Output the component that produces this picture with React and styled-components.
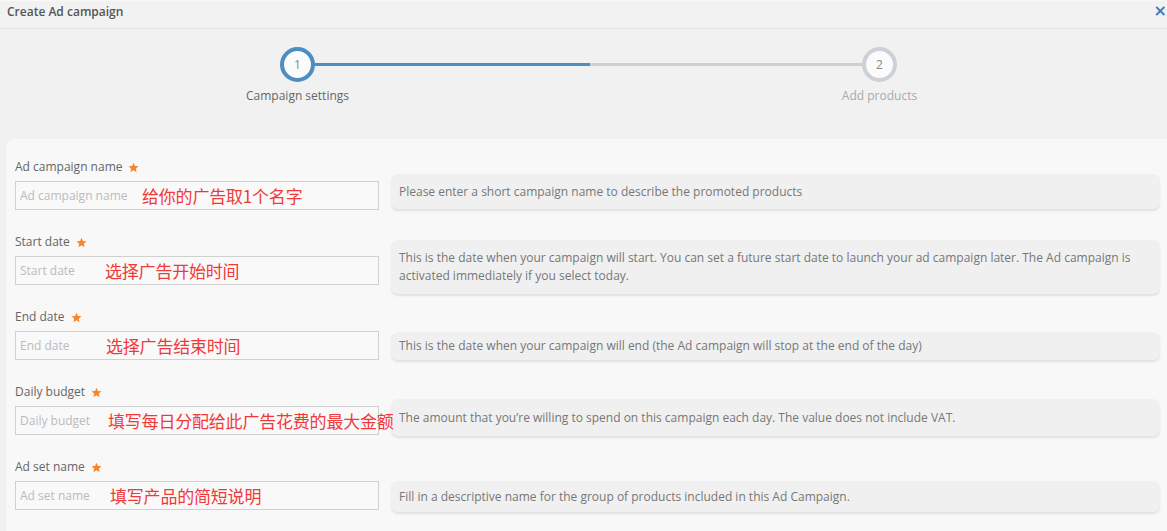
import React from 'react'
import styled, {createGlobalStyle} from 'styled-components'

const Global = createGlobalStyle`
  html, body {
    margin: 0;
    padding: 0;
    background: #f1f1f1;
    overflow: hidden;
    font-family: "Open Sans", "Noto Sans", sans-serif;
  }
`

const Page = styled.div`
  width: 1167px;
  height: 531px;
  overflow: hidden;
  background: #f1f1f1;
`

const Header = styled.div`
  height: 29px;
  box-sizing: border-box;
  display: flex;
  justify-content: space-between;
  align-items: flex-start;
  padding: 3px 0 0 7px;
  border-top: 1px solid #f8f8f8;
  border-bottom: 1px solid #e3e3e3;
  background: #f2f2f2;
`

const Title = styled.div`
  font-size: 12px;
  line-height: 16px;
  font-weight: 600;
  color: #555555;
`

const Close = styled.div`
  font-size: 16px;
  line-height: 14px;
  font-weight: bold;
  color: #3b7cc4;
  margin-right: 0;
  font-family: "DejaVu Sans", sans-serif;
`

const Stepper = styled.div`
  height: 110px;
  box-sizing: border-box;
  display: flex;
  align-items: flex-start;
  padding: 18px 0 0 280px;
`

const Step = styled.div`
  width: 35px;
  display: flex;
  flex-direction: column;
  align-items: center;
  gap: 6px;
  position: relative;
  z-index: 1;
`

const Circle = styled.div`
  width: 35px;
  height: 35px;
  box-sizing: border-box;
  border-radius: 50%;
  border: 4px solid ${p => (p.$active ? '#4c8dc2' : '#cdd0d4')};
  background: #fbfbfb;
  display: flex;
  align-items: center;
  justify-content: center;
  font-size: 12px;
  color: #888888;
`

const StepLabel = styled.div`
  font-size: 12px;
  line-height: 16px;
  white-space: nowrap;
  color: ${p => (p.$active ? '#666666' : '#aaaaaa')};
`

const Connector = styled.div`
  width: 547px;
  height: 3px;
  margin-top: 16px;
  background: linear-gradient(to right, #4c8dc2 50.3%, #cdd0d4 50.3%);
`

const Card = styled.div`
  margin-left: 6px;
  width: 1200px;
  background: #f8f8f8;
  border-radius: 8px 8px 0 0;
  padding: 20px 0 40px 9px;
  box-sizing: border-box;
  display: flex;
  flex-direction: column;
  gap: 24px;
`

const Row = styled.div`
  display: flex;
  align-items: flex-start;
  gap: 12px;
  height: 51px;
`

const Field = styled.div`
  width: 364px;
  display: flex;
  flex-direction: column;
  gap: 6px;
`

const Label = styled.div`
  display: flex;
  align-items: center;
  gap: 6px;
  font-size: 12px;
  line-height: 16px;
  color: #666666;
`

const InputBox = styled.div`
  position: relative;
  height: 29px;
  box-sizing: border-box;
  border: 1px solid #d0d0d0;
  background: #f9f9f9;
  display: flex;
  align-items: center;
  padding-left: 4px;
  font-size: 12px;
  color: #bbbbbb;
`

const Note = styled.span`
  position: absolute;
  top: 0;
  bottom: 0;
  left: ${p => p.$left}px;
  display: flex;
  align-items: center;
  z-index: 2;
  white-space: nowrap;
  font-family: "Noto Sans CJK SC", sans-serif;
  font-size: 17px;
  letter-spacing: -0.2px;
  color: #f03a3a;
`

const Help = styled.div`
  width: 769px;
  box-sizing: border-box;
  margin-top: ${p => p.$top}px;
  min-height: ${p => p.$h}px;
  display: flex;
  align-items: center;
  padding: 0 8px;
  background: #f0f0f0;
  border-radius: 7px;
  box-shadow: 0 2px 2px rgba(0, 0, 0, 0.09);
  font-size: 12px;
  line-height: 18px;
  color: #777777;
`

const Star = () => (
  <svg width="11" height="11" viewBox="0 0 24 24">
    <path
      fill="#f7862a"
      d="M12 1.5l3.1 7.2 7.8.7-5.9 5.2 1.8 7.7L12 18.2l-6.8 4.1 1.8-7.7-5.9-5.2 7.8-.7z"
    />
  </svg>
)

const fields = [
  {
    label: 'Ad campaign name',
    note: '给你的广告取1个名字',
    noteLeft: 126,
    help: 'Please enter a short campaign name to describe the promoted products',
    top: 15,
    h: 35,
  },
  {
    label: 'Start date',
    note: '选择广告开始时间',
    noteLeft: 89,
    help: 'This is the date when your campaign will start. You can set a future start date to launch your ad campaign later. The Ad campaign is activated immediately if you select today.',
    top: 6,
    h: 54,
  },
  {
    label: 'End date',
    note: '选择广告结束时间',
    noteLeft: 90,
    help: 'This is the date when your campaign will end (the Ad campaign will stop at the end of the day)',
    top: 23,
    h: 28,
  },
  {
    label: 'Daily budget',
    note: '填写每日分配给此广告花费的最大金额',
    noteLeft: 92,
    help: 'The amount that you’re willing to spend on this campaign each day. The value does not include VAT.',
    top: 15,
    h: 37,
  },
  {
    label: 'Ad set name',
    note: '填写产品的简短说明',
    noteLeft: 94,
    help: 'Fill in a descriptive name for the group of products included in this Ad Campaign.',
    top: 22,
    h: 31,
  },
]

const App = () => {
  return (
    <Page>
      <Global />
      <Header>
        <Title>Create Ad campaign</Title>
        <Close>×</Close>
      </Header>
      <Stepper>
        <Step>
          <Circle $active>1</Circle>
          <StepLabel $active>Campaign settings</StepLabel>
        </Step>
        <Connector />
        <Step>
          <Circle>2</Circle>
          <StepLabel>Add products</StepLabel>
        </Step>
      </Stepper>
      <Card>
        {fields.map(f => (
          <Row key={f.label}>
            <Field>
              <Label>
                {f.label}
                <Star />
              </Label>
              <InputBox>
                {f.label}
                <Note $left={f.noteLeft}>{f.note}</Note>
              </InputBox>
            </Field>
            <Help $top={f.top} $h={f.h}>
              {f.help}
            </Help>
          </Row>
        ))}
      </Card>
    </Page>
  )
}

export default App
